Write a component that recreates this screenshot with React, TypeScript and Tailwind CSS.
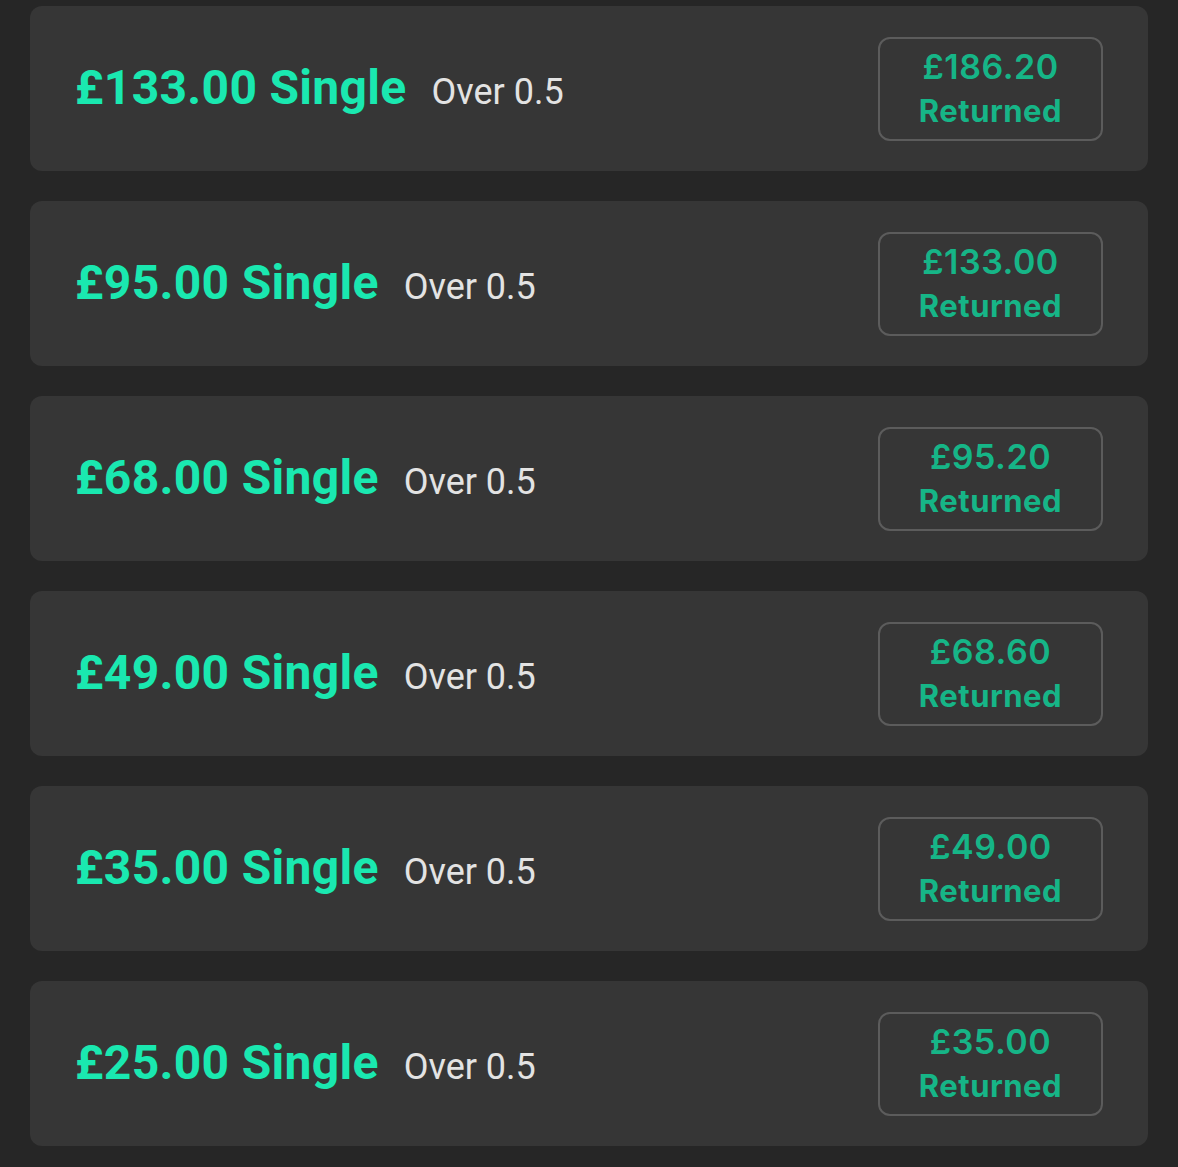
import React from "react";

const bets = [
  { stake: "£133.00", ret: "£186.20" },
  { stake: "£95.00", ret: "£133.00" },
  { stake: "£68.00", ret: "£95.20" },
  { stake: "£49.00", ret: "£68.60" },
  { stake: "£35.00", ret: "£49.00" },
  { stake: "£25.00", ret: "£35.00" },
];

export default function App() {
  return (
    <div className="min-h-[1167px] w-full bg-[#262626] px-[30px] pt-[6px] pb-[21px]" style={{ fontFamily: "Roboto, 'Noto Sans', sans-serif" }}>
      <div className="flex flex-col gap-[30px]">
        {bets.map((b) => (
          <div key={b.stake} className="flex h-[165px] items-center justify-between rounded-[12px] bg-[#363636] pl-[45px] pr-[45px]">
            <div className="flex items-baseline gap-[25px] pb-[2px]">
              <span className="text-[48px] font-bold leading-none tracking-[0.3px] text-[#1ae8b0]">{b.stake} Single</span>
              <span className="text-[36px] font-normal leading-none text-[#e3e3e3]">Over 0.5</span>
            </div>
            <div className="flex h-[104px] w-[225px] flex-col items-center justify-center rounded-[12px] border-2 border-[#5c5c5c] text-[#16b587]" style={{ fontFamily: "Inter, Roboto, sans-serif" }}>
              <span className="text-[34px] font-semibold leading-[44px] tracking-[0.5px]">{b.ret}</span>
              <span className="text-[31px] font-bold leading-[44px] tracking-[0.5px]">Returned</span>
            </div>
          </div>
        ))}
      </div>
    </div>
  );
}
